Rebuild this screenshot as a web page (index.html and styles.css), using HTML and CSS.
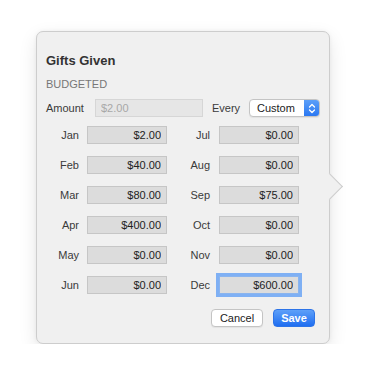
FILE: index.html
```html
<!doctype html>
<html lang="en">
  <head>
    <meta charset="UTF-8" />
    <meta name="viewport" content="width=device-width, initial-scale=1.0" />
    <title>Gifts Given</title>
    <link rel="stylesheet" href="styles.css">
  </head>
  <body>
    <div class="popover">
      <h1 class="title">Gifts Given</h1>
      <div class="section">BUDGETED</div>

      <div class="amount-row">
        <label class="amount-label">Amount</label>
        <input class="amount-input" type="text" placeholder="$2.00">
        <label class="every-label">Every</label>
        <div class="select">
          <span class="select-text">Custom</span>
          <span class="stepper">
            <svg width="8" height="11" viewBox="0 0 8 11">
              <path d="M1.5 4 L4 1.5 L6.5 4 M1.5 7 L4 9.5 L6.5 7" fill="none" stroke="#fff" stroke-width="1.3" stroke-linecap="round" stroke-linejoin="round"/>
            </svg>
          </span>
        </div>
      </div>

      <!-- months -->
      <div class="months">
        <label class="month">Jan</label><input class="money" value="$2.00">
        <label class="month month-right">Jul</label><input class="money" value="$0.00">
        <label class="month">Feb</label><input class="money" value="$40.00">
        <label class="month month-right">Aug</label><input class="money" value="$0.00">
        <label class="month">Mar</label><input class="money" value="$80.00">
        <label class="month month-right">Sep</label><input class="money" value="$75.00">
        <label class="month">Apr</label><input class="money" value="$400.00">
        <label class="month month-right">Oct</label><input class="money" value="$0.00">
        <label class="month">May</label><input class="money" value="$0.00">
        <label class="month month-right">Nov</label><input class="money" value="$0.00">
        <label class="month">Jun</label><input class="money" value="$0.00">
        <label class="month month-right">Dec</label><input class="money focused" value="$600.00">
      </div>

      <div class="actions">
        <button class="btn cancel">Cancel</button>
        <button class="btn save">Save</button>
      </div>
    </div>
  </body>
</html>
```

FILE: styles.css
```css
body {
  margin: 0;
  background: #ffffff;
  font-family: "Liberation Sans", Arial, sans-serif;
  font-size: 11px;
  color: #3a3a3a;
}
.popover {
  position: relative;
  box-sizing: border-box;
  margin: 31px 0 0 36px;
  width: 294px;
  height: 313px;
  padding: 21px 14px 0 9px;
  background: #f0f0f0;
  border: 1px solid #cdcdcd;
  border-radius: 7px;
  box-shadow: 0 6px 18px rgba(0,0,0,0.10), 0 0 4px rgba(0,0,0,0.05);
}
.popover::after {
  content: "";
  position: absolute;
  right: -10px;
  top: 145px;
  width: 18px;
  height: 18px;
  background: #f0f0f0;
  border-top: 1px solid #cdcdcd;
  border-right: 1px solid #cdcdcd;
  transform: rotate(45deg);
}
.title {
  margin: 0 0 8px 0;
  font-size: 13px;
  line-height: 16px;
  font-weight: bold;
  color: #333;
}
.section {
  line-height: 14px;
  color: #777;
  margin-bottom: 8px;
}
.amount-row {
  display: flex;
  align-items: center;
  height: 18px;
  margin-bottom: 9px;
}
.amount-row > * {
  flex-shrink: 0;
}
.amount-label {
  width: 49px;
}
.amount-input {
  box-sizing: border-box;
  width: 108px;
  height: 18px;
  padding: 0 5px;
  border: 1px solid #d6d6d6;
  background: #e6e6e6;
  font-family: inherit;
  font-size: 11px;
  outline: none;
}
.amount-input::placeholder {
  color: #a8a8a8;
}
.every-label {
  margin-left: 9px;
  width: 37px;
}
.select {
  box-sizing: border-box;
  display: flex;
  width: 71px;
  height: 18px;
  background: #fff;
  border: 1px solid #c4c4c4;
  border-radius: 4px;
  overflow: hidden;
  box-shadow: 0 1px 1px rgba(0,0,0,0.06);
}
.select-text {
  flex: 1;
  padding-left: 7px;
  line-height: 16px;
  color: #222;
}
.stepper {
  width: 15px;
  display: flex;
  align-items: center;
  justify-content: center;
  background: linear-gradient(#5c9ff8, #2b78f2);
}
.months {
  display: grid;
  grid-template-columns: 41px 80px 52px 80px;
  grid-auto-rows: 18px;
  row-gap: 12px;
}
.month {
  text-align: right;
  padding-right: 8px;
  line-height: 18px;
}
.month-right {
  padding-right: 9px;
}
.money {
  box-sizing: border-box;
  width: 80px;
  height: 18px;
  padding: 0 5px;
  border: 1px solid #c6c6c6;
  background: #dcdcdc;
  text-align: right;
  font-family: inherit;
  font-size: 11px;
  color: #222;
  outline: none;
}
.focused {
  box-shadow: 0 0 0 3px #7fb0f4;
  border-color: #8ab4ee;
}
.actions {
  display: flex;
  justify-content: flex-end;
  gap: 10px;
  margin-top: 15px;
}
.btn {
  box-sizing: border-box;
  height: 18px;
  padding: 0;
  border-radius: 4px;
  font-family: inherit;
  font-size: 11px;
  cursor: pointer;
}
.cancel {
  width: 52px;
  background: #fff;
  border: 1px solid #c4c4c4;
  color: #222;
  box-shadow: 0 1px 1px rgba(0,0,0,0.06);
}
.save {
  width: 42px;
  background: linear-gradient(#5ea0f9, #1f6ef1);
  border: 1px solid #2d74e8;
  color: #fff;
  font-weight: bold;
}
```
